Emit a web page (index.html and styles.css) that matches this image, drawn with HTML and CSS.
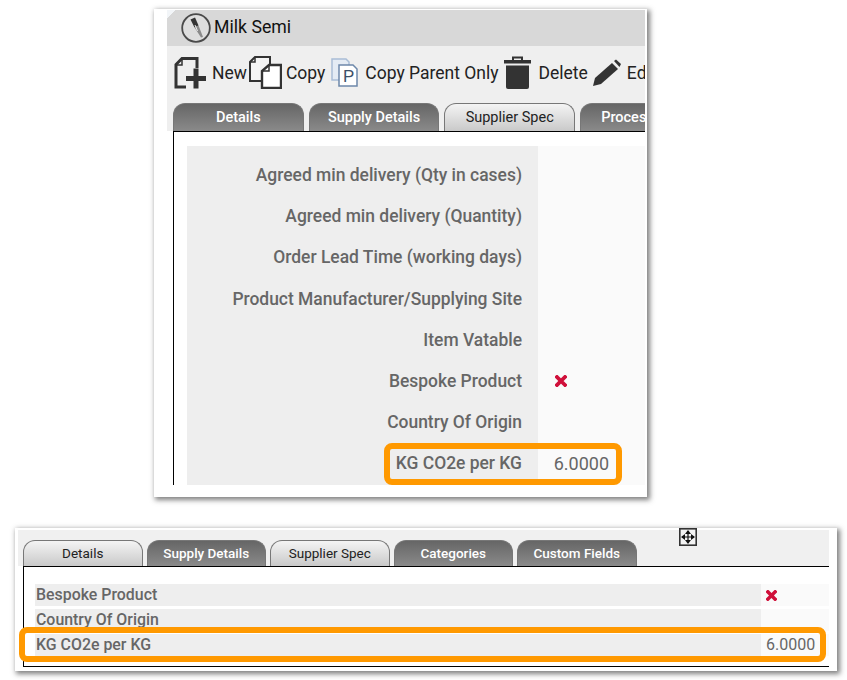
FILE: index.html
```html
<!DOCTYPE html>
<html lang="en">
<head>
<meta charset="utf-8">
<title>Milk Semi</title>
<link rel="stylesheet" href="styles.css">
</head>
<body>
<section class="card card-top">
  <div class="clip">
    <div class="title-bar">
      <svg class="ico-title" viewBox="0 0 32 32"><circle cx="16" cy="16" r="13.800" fill="#dedede" stroke="#4a4a4a" stroke-width="1.800"/><path d="M10.500 7.500L15 5.500L18.500 13.500L14.500 15.500Z" fill="#333"/><path d="M14.500 15.500L18.500 13.500L23 25L21 25.500Z" fill="#8a8a8a"/><path d="M15 13L17.500 19" stroke="#eee" stroke-width="1"/></svg>
      <span class="title-text">Milk Semi</span>
    </div>
    <div class="toolbar">
      <svg class="ico ico-new" viewBox="0 0 32 32"><path d="M12 30H2V7.500L8 1.500H23V11" fill="none" stroke="#333" stroke-width="3"/><path d="M8 2V8H2" fill="none" stroke="#333" stroke-width="1.500"/><path d="M12 21.500H32M22 11.500V31.500" stroke="#333" stroke-width="5"/></svg>
      <span class="tool-text t-new">New</span>
      <svg class="ico ico-copy" viewBox="0 0 33 33"><path d="M1 25V6L6 1H21V25Z" fill="#f4f4f4" stroke="#333" stroke-width="2"/><path d="M13 32V15L20 9H32V32Z" fill="#fff" stroke="#333" stroke-width="2.400"/><path d="M6 1V6H1M20 9V15H13" fill="none" stroke="#333" stroke-width="1.500"/></svg>
      <span class="tool-text t-copy">Copy</span>
      <svg class="ico ico-parent" viewBox="0 0 27 29"><path d="M1 1H15L18 4V22H1Z" fill="#e4ebf4" stroke="#a9bdd6" stroke-width="1.500"/><path d="M8 7H22L26 11V28H8Z" fill="#fff" stroke="#6d88aa" stroke-width="1.500"/><text class="ico-p" x="12" y="24">P</text></svg>
      <span class="tool-text t-parent">Copy Parent Only</span>
      <svg class="ico ico-trash" viewBox="0 0 27 33"><path d="M9 4V1.500H18V4" fill="none" stroke="#333" stroke-width="2"/><rect y="4" width="27" height="3.500" fill="#333"/><path d="M2 9.500H25V31Q25 33 23 33H4Q2 33 2 31Z" fill="#333"/></svg>
      <span class="tool-text t-delete">Delete</span>
      <svg class="ico ico-pencil" viewBox="0 0 28 27"><path d="M0 27L2 19L19 4L25 10L8 25Z" fill="#333"/><path d="M21 2L23 0.500L28 5L26.500 8Z" fill="#333"/></svg>
      <span class="tool-text t-edit">Edit</span>
    </div>
    <div class="tabs tabs-top">
      <div class="tab dark">Details</div>
      <div class="tab dark">Supply Details</div>
      <div class="tab light">Supplier Spec</div>
      <div class="tab dark">Process Spec</div>
    </div>
    <div class="panel">
      <div class="spec">
        <div class="row"><div class="label">Agreed min delivery (Qty in cases)</div><div class="value"></div></div>
        <div class="row"><div class="label">Agreed min delivery (Quantity)</div><div class="value"></div></div>
        <div class="row"><div class="label">Order Lead Time (working days)</div><div class="value"></div></div>
        <div class="row"><div class="label">Product Manufacturer/Supplying Site</div><div class="value"></div></div>
        <div class="row"><div class="label">Item Vatable</div><div class="value"></div></div>
        <div class="row"><div class="label">Bespoke Product</div><div class="value"><svg class="cross" viewBox="0 0 12 12"><path d="M2 2L10 10M10 2L2 10" stroke="#d0103a" stroke-width="3.800" stroke-linecap="square"/></svg></div></div>
        <div class="row"><div class="label">Country Of Origin</div><div class="value"></div></div>
        <div class="row"><div class="label">KG CO2e per KG</div><div class="value num">6.0000</div></div>
      </div>
    </div>
  </div>
  <div class="mark mark-top"></div>
</section>

<section class="card card-bottom">
  <div class="strip">
    <div class="tabs tabs-bottom">
      <div class="tab light">Details</div>
      <div class="tab dark">Supply Details</div>
      <div class="tab light">Supplier Spec</div>
      <div class="tab dark">Categories</div>
      <div class="tab dark">Custom Fields</div>
    </div>
  </div>
  <svg class="move" viewBox="0 0 18 18"><rect x="0.800" y="0.800" width="16.400" height="16.400" fill="#f4f4f4" stroke="#333" stroke-width="1.600"/><path d="M9 3V15M3 9H15" stroke="#111" stroke-width="1.200"/><path d="M9 2L12 6H6ZM9 16L6 12H12ZM2 9L6 6V12ZM16 9L12 12V6Z" fill="#111"/></svg>
  <div class="panel2">
    <div class="row2"><div class="label2">Bespoke Product</div><div class="value2"><svg class="cross" viewBox="0 0 12 12"><path d="M2 2L10 10M10 2L2 10" stroke="#d0103a" stroke-width="3.800" stroke-linecap="square"/></svg></div></div>
    <div class="row2"><div class="label2">Country Of Origin</div><div class="value2"></div></div>
    <div class="row2"><div class="label2">KG CO2e per KG</div><div class="value2 num2">6.0000</div></div>
  </div>
  <div class="mark mark-bottom"></div>
</section>
</body>
</html>
```

FILE: styles.css
```css
html, body { margin: 0; padding: 0; }
body {
  width: 847px;
  height: 680px;
  overflow: hidden;
  background: #fff;
  font-family: Roboto, "Liberation Sans", sans-serif;
  padding-top: 9px;
  box-sizing: border-box;
}
.card {
  position: relative;
  background: #fff;
  box-shadow: 2px 2px 5px 1px rgba(60, 60, 60, .65);
  box-sizing: border-box;
}
.card-top {
  width: 493px;
  height: 488px;
  margin-left: 154px;
  padding: 1px 2px 0 13px;
}
.card-bottom {
  width: 822px;
  height: 143px;
  margin: 31px 0 0 15px;
  padding: 2px 8px 0 3px;
}
.clip { height: 475px; overflow: hidden; }
.title-bar {
  height: 36px;
  display: flex;
  align-items: center;
  box-sizing: border-box;
  background: linear-gradient(135deg, #f2f5f8 0 6px, transparent 6px), #d8d8d8;
  padding: 0 0 2px 13px;
}
.ico-title { width: 32px; height: 32px; flex: none; margin-top: 2px; }
.title-text { font-size: 17.700px; color: #111; margin-left: 2px; }
.toolbar {
  height: 57px;
  display: flex;
  align-items: center;
  box-sizing: border-box;
  background: #efefef;
  white-space: nowrap;
  padding: 0 0 4px 7px;
}
.ico { flex: none; display: block; }
.ico-new { width: 32px; height: 32px; }
.ico-copy { width: 33px; height: 33px; margin-left: 2px; }
.ico-parent { width: 27px; height: 29px; margin-left: 6px; }
.ico-trash { width: 27px; height: 33px; margin-left: 5px; }
.ico-pencil { width: 28px; height: 27px; margin-left: 5px; }
.ico-p { font: 400 17px "Liberation Sans", sans-serif; fill: #3d4f68; }
.tool-text { font-size: 17.500px; color: #222; }
.t-new { margin-left: 6px; }
.t-copy { margin-left: 4px; }
.t-parent { margin-left: 7px; }
.t-delete { margin-left: 8px; }
.t-edit { margin-left: 6px; }
.tabs { display: flex; align-items: flex-end; background: #efefef; }
.tabs-top { height: 28px; gap: 5px; padding-left: 6px; }
.tabs-bottom { height: 26px; gap: 4px; padding-left: 5px; }
.tab {
  flex: none;
  box-sizing: border-box;
  height: 100%;
  border: 1px solid #777;
  border-bottom: 0;
  border-radius: 12px 12px 0 0;
  display: flex;
  align-items: center;
  justify-content: center;
  font-size: 14.500px;
  padding-bottom: 1px;
  white-space: nowrap;
}
.tabs-top .tab { width: 130.700px; }
.tabs-bottom .tab { width: 119.500px; font-size: 13.500px; padding-bottom: 2px; }
.dark { background: linear-gradient(#666, #8a8a8a); color: #fff; font-weight: 500; }
.light { background: linear-gradient(#f4f4f4, #c9c9c9); color: #222; }
.panel {
  margin-left: 6px;
  border-top: 1px solid #000;
  border-left: 1px solid #000;
  padding: 14px 0 0 13px;
  height: 354px;
  box-sizing: border-box;
}
.spec {
  display: flex;
  flex-direction: column;
  height: 339px;
  padding-top: 8.500px;
  box-sizing: border-box;
  background: linear-gradient(90deg, #eee 351px, #fafafa 351px);
}
.row { display: flex; height: 41.200px; flex: none; align-items: center; }
.label {
  width: 351px;
  box-sizing: border-box;
  padding-right: 16px;
  text-align: right;
  font-size: 17.450px;
  font-weight: 500;
  color: #666;
}
.value { flex: none; width: 71px; padding-left: 17px; color: #666; font-size: 18px; }
.row .cross { width: 12px; height: 12px; display: block; }
.num { text-align: right; }
.value.num { width: 71px; padding-left: 0; }
.strip { height: 36px; background: #f0f0f0; display: flex; align-items: flex-end; }
.strip .tabs { background: none; }
.move { position: absolute; left: 664px; top: 0; width: 18px; height: 18px; }
.panel2 {
  margin-left: 5px;
  border-top: 1px solid #000;
  border-bottom: 1px solid #000;
  border-left: 1px solid #000;
  height: 101px;
  box-sizing: border-box;
  padding: 17px 0 0 11px;
  display: flex;
  flex-direction: column;
  gap: 3px;
}
.row2 { display: flex; height: 22px; align-items: center; }
.label2 {
  width: 726px;
  height: 100%;
  background: #eee;
  font-size: 15.900px;
  font-weight: 500;
  color: #666;
  display: flex;
  align-items: center;
  padding: 0 0 2px 1px;
  box-sizing: border-box;
}
.value2 {
  flex: 1;
  height: 100%;
  background: #fafafa;
  display: flex;
  align-items: center;
  padding: 0 0 2px 5px;
  box-sizing: border-box;
  color: #666;
  font-size: 16px;
}
.row2 .cross { width: 11px; height: 11px; display: block; margin-top: 2px; }
.mark {
  position: absolute;
  box-sizing: border-box;
  border: 6px solid #f90;
  border-radius: 8px;
  pointer-events: none;
}
.mark-top { left: 230px; top: 434px; width: 238px; height: 42px; }
.mark-bottom { left: 4px; top: 99px; width: 807px; height: 35px; }
```
